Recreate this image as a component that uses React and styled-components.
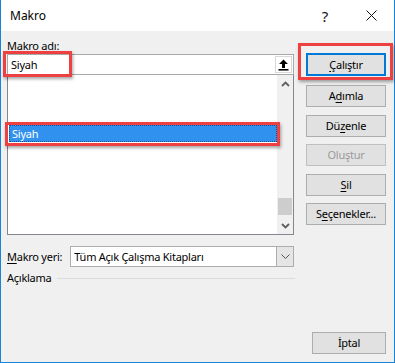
import React from "react";
import styled, { createGlobalStyle } from "styled-components";

const Global = createGlobalStyle`
  html, body { margin: 0; padding: 0; background: #ffffff; }
  body { font-family: "Noto Sans", "Segoe UI", sans-serif; font-size: 11px; letter-spacing: -0.25px; color: #000; }
  * { box-sizing: border-box; }
`;

const Window = styled.div`
  width: 395px;
  height: 363px;
  display: flex;
  flex-direction: column;
  background: #f0f0f0;
  border-left: 1px solid #1883d7;
  border-right: 1px solid #1883d7;
  border-bottom: 1px solid #1883d7;
`;

const TitleBar = styled.div`
  height: 31px;
  flex: none;
  background: #ffffff;
  display: flex;
  align-items: center;
  padding-left: 9px;
`;

const Title = styled.div`
  flex: 1;
  font-size: 12px;
  letter-spacing: 0;
  line-height: 16px;
`;

const CaptionButton = styled.div`
  width: 46px;
  height: 31px;
  display: flex;
  align-items: center;
  justify-content: center;
  font-size: 15px;
  color: #111;
`;

const Body = styled.div`
  flex: 1;
  display: flex;
  padding: 0 8px 8px 6px;
  gap: 11px;
`;

const LeftCol = styled.div`
  width: 289px;
  display: flex;
  flex-direction: column;
  padding-top: 7px;
`;

const RightCol = styled.div`
  flex: 1;
  display: flex;
  flex-direction: column;
  padding-top: 22px;
`;

const Label = styled.div`
  line-height: 16px;
  height: 16px;
  white-space: nowrap;
`;

const Key = styled.span`
  text-decoration: underline;
  text-underline-offset: 2px;
`;

const Relative = styled.div`
  position: relative;
`;

const Mark = styled.div`
  position: absolute;
  border: 3px solid #ee4040;
  box-shadow: 1px 2px 3px rgba(0, 0, 0, 0.35);
  pointer-events: none;
`;

const NameField = styled.div`
  position: relative;
  width: 287px;
  height: 21px;
  background: #fff;
  border: 1px solid #a8a8a8;
  display: flex;
  align-items: center;
  padding-left: 3px;
  line-height: 16px;
`;

const FieldText = styled.div`
  flex: 1;
`;

const RefButton = styled.div`
  width: 17px;
  height: 17px;
  margin-right: 1px;
  background: #fff;
  border: 1px solid #d8d8d8;
  display: flex;
  align-items: center;
  justify-content: center;
`;

const ListBox = styled.div`
  width: 287px;
  height: 160px;
  background: #fff;
  border: 1px solid #828790;
  border-top: none;
  display: flex;
`;

const ListItems = styled.div`
  flex: 1;
  padding: 50px 0 0 1px;
`;

const Item = styled.div`
  position: relative;
  height: 17px;
  line-height: 15px;
  padding-left: 2px;
  color: ${(p) => (p.$selected ? "#fff" : "#000")};
  background: ${(p) => (p.$selected ? "#3092ee" : "transparent")};
  border: 1px dotted ${(p) => (p.$selected ? "#1d4f8c" : "transparent")};
`;

const ScrollBar = styled.div`
  width: 16px;
  background: #f0f0f0;
  display: flex;
  flex-direction: column;
  align-items: center;
`;

const ScrollArrow = styled.div`
  width: 16px;
  height: 17px;
  display: flex;
  align-items: center;
  justify-content: center;
`;

const ScrollTrack = styled.div`
  flex: 1;
  width: 100%;
  display: flex;
  flex-direction: column;
  justify-content: flex-end;
  padding-bottom: 2px;
`;

const Thumb = styled.div`
  height: 17px;
  margin: 0 1px;
  background: #cdcdcd;
`;

const LocationRow = styled.div`
  display: flex;
  align-items: center;
  margin-top: 11px;
  gap: 8px;
`;

const Select = styled.div`
  width: 224px;
  height: 21px;
  background: #fff;
  border: 1px solid #adadad;
  display: flex;
  align-items: center;
  padding-left: 3px;
  line-height: 16px;
`;

const SelectArrow = styled.div`
  width: 17px;
  height: 19px;
  background: #e5e5e5;
  border-left: 1px solid #adadad;
  display: flex;
  align-items: center;
  justify-content: center;
`;

const GroupRow = styled.div`
  display: flex;
  align-items: center;
  margin-top: 3px;
  gap: 5px;
`;

const GroupLine = styled.div`
  flex: 1;
  height: 1px;
  background: #dcdcdc;
`;

const Button = styled.div`
  height: ${(p) => (p.$default ? "23px" : "22px")};
  margin-top: ${(p) => p.$mt || "0px"};
  display: flex;
  align-items: center;
  justify-content: center;
  background: #e1e1e1;
  border: ${(p) => (p.$default ? "2px solid #0078d7" : p.$disabled ? "1px solid #bfbfbf" : "1px solid #adadad")};
  color: ${(p) => (p.$disabled ? "#9a9a9a" : "#000")};
  white-space: nowrap;
  line-height: 16px;
`;

const CancelButton = styled(Button)`
  margin-top: auto;
  margin-left: 6px;
  width: 74px;
`;

const Chevron = ({ up }) => (
  <svg width="9" height="6" viewBox="0 0 9 6">
    <path
      d={up ? "M1 5 L4.5 1.5 L8 5" : "M1 1 L4.5 4.5 L8 1"}
      fill="none"
      stroke="#606060"
      strokeWidth="1.8"
    />
  </svg>
);

export default function App() {
  return (
    <>
      <Global />
      <Window>
        <TitleBar>
          <Title>Makro</Title>
          <CaptionButton>?</CaptionButton>
          <CaptionButton>
            <svg width="11" height="11" viewBox="0 0 11 11">
              <path d="M0.5 0.5 L10.5 10.5 M10.5 0.5 L0.5 10.5" stroke="#111" strokeWidth="1" />
            </svg>
          </CaptionButton>
        </TitleBar>
        <Body>
          <LeftCol>
            <Label>
              Mak<Key>r</Key>o adı:
            </Label>
            <NameField>
              <FieldText>Siyah</FieldText>
              <RefButton>
                <svg width="11" height="12" viewBox="0 0 11 12">
                  <path d="M5.5 0.5 L10 5 L7 5 L7 9 L4 9 L4 5 L1 5 Z" fill="#000" />
                  <rect x="0.5" y="10" width="10" height="1.6" fill="#000" />
                </svg>
              </RefButton>
              <Mark style={{ left: -5, top: -4, width: 69, height: 26 }} />
            </NameField>
            <ListBox>
              <ListItems>
                <Item $selected>
                  Siyah
                  <Mark style={{ left: -5, top: -4, right: -4, bottom: -5 }} />
                </Item>
              </ListItems>
              <ScrollBar>
                <ScrollArrow>
                  <Chevron up />
                </ScrollArrow>
                <ScrollTrack>
                  <Thumb />
                </ScrollTrack>
                <ScrollArrow>
                  <Chevron />
                </ScrollArrow>
              </ScrollBar>
            </ListBox>
            <LocationRow>
              <Label>
                <Key>M</Key>akro yeri:
              </Label>
              <Select>
                <FieldText>Tüm Açık Çalışma Kitapları</FieldText>
                <SelectArrow>
                  <svg width="9" height="5" viewBox="0 0 9 5">
                    <path d="M0.5 0.5 L4.5 4.5 L8.5 0.5" fill="none" stroke="#555" strokeWidth="1" />
                  </svg>
                </SelectArrow>
              </Select>
            </LocationRow>
            <GroupRow>
              <Label>Açıklama</Label>
              <GroupLine />
            </GroupRow>
          </LeftCol>
          <RightCol>
            <Relative>
              <Button $default>
                <Key>Ç</Key>alıştır
              </Button>
              <Mark style={{ left: -8, top: -10, right: -7, bottom: -4 }} />
            </Relative>
            <Button $mt="9px">
              A<Key>d</Key>ımla
            </Button>
            <Button $mt="7.5px">
              Dü<Key>z</Key>enle
            </Button>
            <Button $mt="7.5px" $disabled>
              Oluştur
            </Button>
            <Button $mt="7.5px">
              <Key>S</Key>il
            </Button>
            <Button $mt="7.5px">
              S<Key>e</Key>çenekler...
            </Button>
            <CancelButton>İptal</CancelButton>
          </RightCol>
        </Body>
      </Window>
    </>
  );
}
